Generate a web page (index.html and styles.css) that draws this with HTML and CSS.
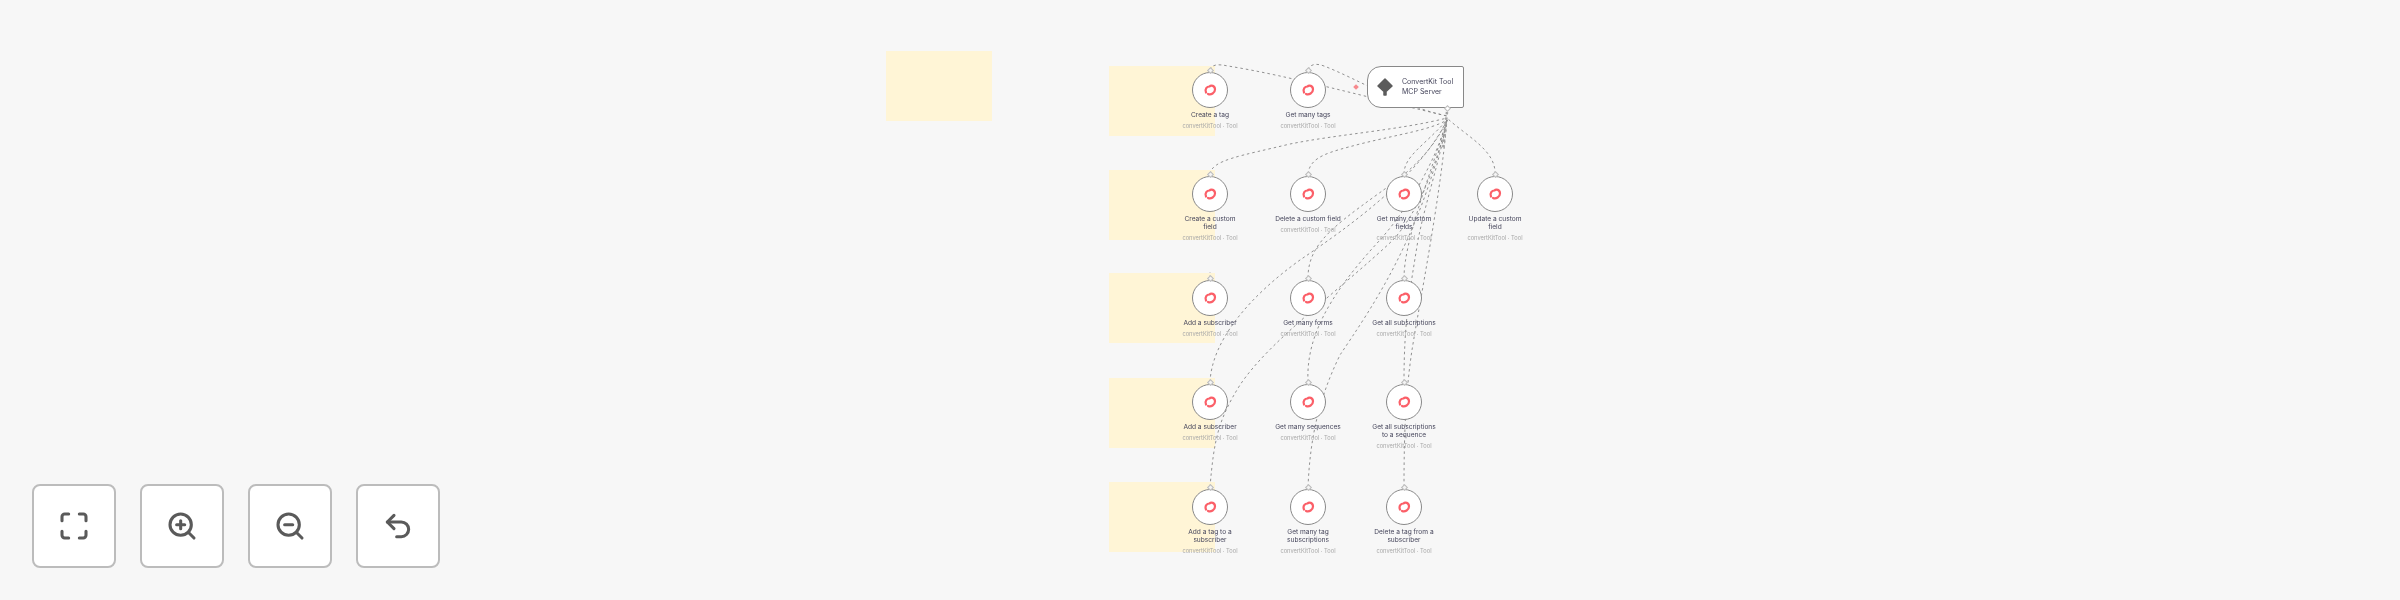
FILE: index.html
```html
<!DOCTYPE html>
<html>

<head>
    <meta http-equiv="Content-Type" content="text/html; charset=utf-8">
    <title>ConvertKit Tool MCP Server</title>
    <link rel="stylesheet" href="styles.css">
</head>

<body>
    <div class="canvas">
        <div class="stage">
            <!-- sticky notes -->
            <div class="sticky sticky-free"></div>
            <div class="sticky r1"></div>
            <div class="sticky r2"></div>
            <div class="sticky r3"></div>
            <div class="sticky r4"></div>
            <div class="sticky r5"></div>

            <!-- connections, all going back to the server node -->
            <svg class="edges" width="2400" height="600" viewBox="0 0 2400 600">
                <path d="M1210 70C1212 64 1218 64 1228 66C1290 76 1370 98 1447 116" />
                <path d="M1308 70C1310 64 1316 63 1324 66C1360 80 1400 106 1447 116" />
                <path d="M1210 174C1212 160 1240 156 1290 144C1340 134 1400 130 1447 118" />
                <path d="M1308 174C1310 156 1330 152 1360 144C1400 134 1430 130 1447 120" />
                <path d="M1404 174C1404 156 1424 146 1447 120" />
                <path d="M1495 174C1496 150 1466 136 1447 118" />
                <path d="M1210 278V272" />
                <path d="M1308 278C1308 240 1340 222 1400 178C1424 158 1438 140 1447 120" />
                <path d="M1404 278C1404 240 1432 170 1447 120" />
                <path d="M1210 382C1212 340 1250 296 1300 260C1350 226 1420 176 1447 120" />
                <path d="M1308 382C1306 340 1326 298 1380 240C1410 206 1436 160 1447 120" />
                <path d="M1404 382C1404 320 1410 290 1418 240C1426 200 1440 160 1447 120" />
                <path d="M1210 487C1214 440 1218 420 1240 385C1270 340 1340 290 1393 240C1420 210 1438 160 1447 120" />
                <path d="M1308 487C1310 440 1318 400 1340 355C1370 310 1420 240 1447 120" />
                <path d="M1404 487C1404 430 1406 390 1412 350C1420 300 1440 200 1447 120" />
                <path class="edge-thick" d="M1447 112L1443 150" />
            </svg>
            <span class="edge-mark"></span>

            <!-- server node -->
            <div class="server">
                <svg class="server-icon" width="18" height="20" viewBox="0 0 18 20">
                    <path d="M9 2L16 9L10 14.5V18H8V14.5L2 9Z" />
                </svg>
                <div class="server-name">ConvertKit Tool<br>MCP Server</div>
                <span class="port port-server"></span>
            </div>

            <!-- tools -->
            <div class="tool c1 r1"><span class="port"></span><div class="circle"><svg class="logo" viewBox="0 0 14 14"><path d="M3 9.5C1.500 6 4 3.500 6.500 3.500C8 1.800 12 2.500 12 6.500C12 10 8 12.300 5 11" /></svg></div>
                <p class="label">Create a tag</p><p class="sub">convertKitTool · Tool</p></div>
            <div class="tool c2 r1"><span class="port"></span><div class="circle"><svg class="logo" viewBox="0 0 14 14"><path d="M3 9.5C1.500 6 4 3.500 6.500 3.500C8 1.800 12 2.500 12 6.500C12 10 8 12.300 5 11" /></svg></div>
                <p class="label">Get many tags</p><p class="sub">convertKitTool · Tool</p></div>

            <div class="tool c1 r2"><span class="port"></span><div class="circle"><svg class="logo" viewBox="0 0 14 14"><path d="M3 9.5C1.500 6 4 3.500 6.500 3.500C8 1.800 12 2.500 12 6.500C12 10 8 12.300 5 11" /></svg></div>
                <p class="label">Create a custom<br>field</p><p class="sub">convertKitTool · Tool</p></div>
            <div class="tool c2 r2"><span class="port"></span><div class="circle"><svg class="logo" viewBox="0 0 14 14"><path d="M3 9.5C1.500 6 4 3.500 6.500 3.500C8 1.800 12 2.500 12 6.500C12 10 8 12.300 5 11" /></svg></div>
                <p class="label">Delete a custom field</p><p class="sub">convertKitTool · Tool</p></div>
            <div class="tool c3 r2"><span class="port"></span><div class="circle"><svg class="logo" viewBox="0 0 14 14"><path d="M3 9.5C1.500 6 4 3.500 6.500 3.500C8 1.800 12 2.500 12 6.500C12 10 8 12.300 5 11" /></svg></div>
                <p class="label">Get many custom<br>fields</p><p class="sub">convertKitTool · Tool</p></div>
            <div class="tool c4 r2"><span class="port"></span><div class="circle"><svg class="logo" viewBox="0 0 14 14"><path d="M3 9.5C1.500 6 4 3.500 6.500 3.500C8 1.800 12 2.500 12 6.500C12 10 8 12.300 5 11" /></svg></div>
                <p class="label">Update a custom<br>field</p><p class="sub">convertKitTool · Tool</p></div>

            <div class="tool c1 r3"><span class="port"></span><div class="circle"><svg class="logo" viewBox="0 0 14 14"><path d="M3 9.5C1.500 6 4 3.500 6.500 3.500C8 1.800 12 2.500 12 6.500C12 10 8 12.300 5 11" /></svg></div>
                <p class="label">Add a subscriber</p><p class="sub">convertKitTool · Tool</p></div>
            <div class="tool c2 r3"><span class="port"></span><div class="circle"><svg class="logo" viewBox="0 0 14 14"><path d="M3 9.5C1.500 6 4 3.500 6.500 3.500C8 1.800 12 2.500 12 6.500C12 10 8 12.300 5 11" /></svg></div>
                <p class="label">Get many forms</p><p class="sub">convertKitTool · Tool</p></div>
            <div class="tool c3 r3"><span class="port"></span><div class="circle"><svg class="logo" viewBox="0 0 14 14"><path d="M3 9.5C1.500 6 4 3.500 6.500 3.500C8 1.800 12 2.500 12 6.500C12 10 8 12.300 5 11" /></svg></div>
                <p class="label">Get all subscriptions</p><p class="sub">convertKitTool · Tool</p></div>

            <div class="tool c1 r4"><span class="port"></span><div class="circle"><svg class="logo" viewBox="0 0 14 14"><path d="M3 9.5C1.500 6 4 3.500 6.500 3.500C8 1.800 12 2.500 12 6.500C12 10 8 12.300 5 11" /></svg></div>
                <p class="label">Add a subscriber</p><p class="sub">convertKitTool · Tool</p></div>
            <div class="tool c2 r4"><span class="port"></span><div class="circle"><svg class="logo" viewBox="0 0 14 14"><path d="M3 9.5C1.500 6 4 3.500 6.500 3.500C8 1.800 12 2.500 12 6.500C12 10 8 12.300 5 11" /></svg></div>
                <p class="label">Get many sequences</p><p class="sub">convertKitTool · Tool</p></div>
            <div class="tool c3 r4"><span class="port"></span><div class="circle"><svg class="logo" viewBox="0 0 14 14"><path d="M3 9.5C1.500 6 4 3.500 6.500 3.500C8 1.800 12 2.500 12 6.500C12 10 8 12.300 5 11" /></svg></div>
                <p class="label">Get all subscriptions<br>to a sequence</p><p class="sub">convertKitTool · Tool</p></div>

            <div class="tool c1 r5"><span class="port"></span><div class="circle"><svg class="logo" viewBox="0 0 14 14"><path d="M3 9.5C1.500 6 4 3.500 6.500 3.500C8 1.800 12 2.500 12 6.500C12 10 8 12.300 5 11" /></svg></div>
                <p class="label">Add a tag to a<br>subscriber</p><p class="sub">convertKitTool · Tool</p></div>
            <div class="tool c2 r5"><span class="port"></span><div class="circle"><svg class="logo" viewBox="0 0 14 14"><path d="M3 9.5C1.500 6 4 3.500 6.500 3.500C8 1.800 12 2.500 12 6.500C12 10 8 12.300 5 11" /></svg></div>
                <p class="label">Get many tag<br>subscriptions</p><p class="sub">convertKitTool · Tool</p></div>
            <div class="tool c3 r5"><span class="port"></span><div class="circle"><svg class="logo" viewBox="0 0 14 14"><path d="M3 9.5C1.500 6 4 3.500 6.500 3.500C8 1.800 12 2.500 12 6.500C12 10 8 12.300 5 11" /></svg></div>
                <p class="label">Delete a tag from a<br>subscriber</p><p class="sub">convertKitTool · Tool</p></div>
        </div>

        <!-- zoom controls -->
        <div class="controls">
            <button class="ctrl" aria-label="Zoom to fit">
                <svg viewBox="0 0 24 24"><path d="M8 3H5a2 2 0 0 0-2 2v3" /><path d="M21 8V5a2 2 0 0 0-2-2h-3" /><path d="M3 16v3a2 2 0 0 0 2 2h3" /><path d="M16 21h3a2 2 0 0 0 2-2v-3" /></svg>
            </button>
            <button class="ctrl" aria-label="Zoom in">
                <svg viewBox="0 0 24 24"><circle cx="11" cy="11" r="8" /><path d="M21 21l-4.300-4.300" /><path d="M11 8v6" /><path d="M8 11h6" /></svg>
            </button>
            <button class="ctrl" aria-label="Zoom out">
                <svg viewBox="0 0 24 24"><circle cx="11" cy="11" r="8" /><path d="M21 21l-4.300-4.300" /><path d="M8 11h6" /></svg>
            </button>
            <button class="ctrl" aria-label="Reset zoom">
                <svg viewBox="0 0 24 24"><path d="M9 14L4 9l5-5" /><path d="M4 9h10.500a5.500 5.500 0 0 1 0 11H11" /></svg>
            </button>
        </div>
    </div>
</body>

</html>
```
FILE: styles.css
```css
* {
    box-sizing: border-box;
}

body {
    margin: 0;
    background: #f7f7f7;
    font-family: Inter, "Liberation Sans", sans-serif;
}

.canvas {
    position: relative;
    width: 2400px;
    height: 600px;
    overflow: hidden;
}

/* the workflow is drawn zoomed out, so everything on it is soft */
.stage {
    position: absolute;
    top: 0;
    left: 0;
    width: 2400px;
    height: 600px;
    filter: blur(0.5px);
}

.sticky {
    position: absolute;
    left: 1109px;
    width: 106px;
    height: 70px;
    background: #fff5d6;
}

.sticky-free {
    left: 886px;
    top: 51px;
}

.sticky.r1 { top: 66px; }
.sticky.r2 { top: 170px; }
.sticky.r3 { top: 273px; }
.sticky.r4 { top: 378px; }
.sticky.r5 { top: 482px; }

.edges {
    position: absolute;
    top: 0;
    left: 0;
}

.edges path {
    fill: none;
    stroke: #858585;
    stroke-width: 0.9;
    stroke-dasharray: 2.5 3;
}

.edges .edge-thick {
    stroke: #a0a0a0;
    stroke-width: 2.5;
}

.edge-mark {
    position: absolute;
    left: 1354px;
    top: 85px;
    width: 4px;
    height: 4px;
    background: #f78a8e;
    transform: rotate(45deg);
}

.server {
    position: absolute;
    left: 1367px;
    top: 66px;
    width: 97px;
    height: 42px;
    display: flex;
    align-items: center;
    gap: 8px;
    padding-left: 8px;
    background: #fff;
    border: 1px solid #888;
    border-radius: 14px 2px 2px 14px;
}

.server-icon path {
    fill: #5c5c5c;
    stroke: #5c5c5c;
    stroke-width: 1.5;
    stroke-linejoin: round;
}

.server-name {
    font-size: 7px;
    line-height: 10px;
    color: #44445a;
    white-space: nowrap;
}

.port {
    position: absolute;
    left: 50%;
    top: -4px;
    width: 5px;
    height: 5px;
    margin-left: -2.5px;
    background: #f4f4f4;
    border: 1px solid #bbb;
    transform: rotate(45deg);
}

.port-server {
    left: 79px;
    top: 39px;
    background: #fff;
}

.tool {
    position: absolute;
    width: 90px;
    margin-left: -45px;
    display: flex;
    flex-direction: column;
    align-items: center;
    text-align: center;
}

.c1 { left: 1210px; }
.c2 { left: 1308px; }
.c3 { left: 1404px; }
.c4 { left: 1495px; }

.tool.r1 { top: 72px; }
.tool.r2 { top: 176px; }
.tool.r3 { top: 280px; }
.tool.r4 { top: 384px; }
.tool.r5 { top: 489px; }

.circle {
    width: 36px;
    height: 36px;
    display: flex;
    align-items: center;
    justify-content: center;
    background: #fff;
    border: 1px solid #888;
    border-radius: 50%;
}

.logo {
    width: 14px;
    height: 14px;
}

.logo path {
    fill: none;
    stroke: #fb5f68;
    stroke-width: 2.2;
    stroke-linecap: round;
}

.label {
    margin: 3px 0 0;
    font-size: 6.6px;
    line-height: 8px;
    color: #44445a;
    white-space: nowrap;
}

.sub {
    margin: 2px 0 0;
    font-size: 5.7px;
    line-height: 9px;
    color: #a8a8a8;
    white-space: nowrap;
}

.controls {
    position: absolute;
    left: 32px;
    bottom: 32px;
    display: flex;
    gap: 24px;
}

.ctrl {
    width: 84px;
    height: 84px;
    display: flex;
    align-items: center;
    justify-content: center;
    padding: 0;
    background: #fff;
    border: 2px solid #bcbcbc;
    border-radius: 8px;
    filter: blur(0.4px);
}

.ctrl svg {
    width: 32px;
    height: 32px;
    fill: none;
    stroke: #5a5a5a;
    stroke-width: 2.3;
    stroke-linecap: round;
    stroke-linejoin: round;
}
```
